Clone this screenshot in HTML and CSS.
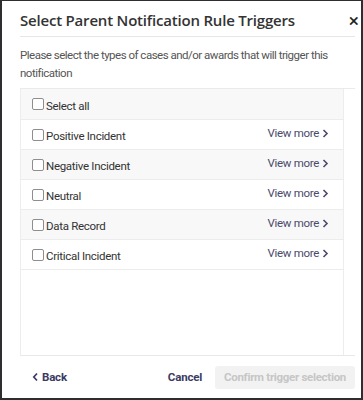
FILE: index.html
```html
<!DOCTYPE html>
<html lang="en">
<head>
  <meta charset="UTF-8">
  <title>Select Parent Notification Rule Triggers</title>
  <meta name="viewport" content="width=device-width, initial-scale=1.0">
  <link rel="stylesheet" href="styles.css">
</head>
<body>
  <div class="modal">
    <div class="modal-header">
      <h2>Select Parent Notification Rule Triggers</h2>
      <span class="close">&times;</span>
    </div>

    <p class="intro">Please select the types of cases and/or awards that will trigger this notification</p>

    <div class="modal-body">
      <div class="trigger-list">
        <div class="row stripe first">
          <label><span class="check"></span>Select all</label>
        </div>
        <div class="row">
          <label><span class="check"></span>Positive Incident</label>
          <a class="more">View more <svg width="7" height="9" viewBox="0 0 7 9"><path d="M1.5 1 L5 4.5 L1.5 8" fill="none" stroke="currentColor" stroke-width="1.6"/></svg></a>
        </div>
        <div class="row stripe">
          <label><span class="check"></span>Negative Incident</label>
          <a class="more">View more <svg width="7" height="9" viewBox="0 0 7 9"><path d="M1.5 1 L5 4.5 L1.5 8" fill="none" stroke="currentColor" stroke-width="1.6"/></svg></a>
        </div>
        <div class="row">
          <label><span class="check"></span>Neutral</label>
          <a class="more">View more <svg width="7" height="9" viewBox="0 0 7 9"><path d="M1.5 1 L5 4.5 L1.5 8" fill="none" stroke="currentColor" stroke-width="1.6"/></svg></a>
        </div>
        <div class="row stripe">
          <label><span class="check"></span>Data Record</label>
          <a class="more">View more <svg width="7" height="9" viewBox="0 0 7 9"><path d="M1.5 1 L5 4.5 L1.5 8" fill="none" stroke="currentColor" stroke-width="1.6"/></svg></a>
        </div>
        <div class="row">
          <label><span class="check"></span>Critical Incident</label>
          <a class="more">View more <svg width="7" height="9" viewBox="0 0 7 9"><path d="M1.5 1 L5 4.5 L1.5 8" fill="none" stroke="currentColor" stroke-width="1.6"/></svg></a>
        </div>
      </div>
    </div>

    <div class="modal-footer">
      <a class="back"><svg width="7" height="10" viewBox="0 0 7 10"><path d="M5 1.5 L1.8 5 L5 8.5" fill="none" stroke="currentColor" stroke-width="1.7"/></svg> Back</a>
      <div class="actions">
        <a class="cancel">Cancel</a>
        <button disabled>Confirm trigger selection</button>
      </div>
    </div>
  </div>
</body>
</html>
```

FILE: styles.css
```css
body {
  margin: 0;
  padding: 1px 2px 2px 2px;
  background: #2e2e30;
  font-family: Roboto, 'Liberation Sans', sans-serif;
  overflow: hidden;
}

.modal {
  background: #fff;
  height: 397px;
  padding: 0 6px 0 18px;
  display: flex;
  flex-direction: column;
  overflow: hidden;
}

.modal-header {
  display: flex;
  justify-content: space-between;
  align-items: center;
  height: 35px;
  border-bottom: 1px solid #e6e6e6;
}

.modal-header h2 {
  margin: 0;
  font-family: 'Open Sans', sans-serif;
  font-size: 15px;
  font-weight: 600;
  letter-spacing: -0.2px;
  color: #333;
  padding-top: 2px;
}

.close {
  font-size: 19px;
  color: #222;
  margin-right: -4px;
  padding-top: 4px;
}

.intro {
  margin: 0;
  padding: 9px 0 6px;
  font-size: 11.5px;
  letter-spacing: -0.5px;
  line-height: 18px;
  color: #555;
  border-bottom: 1px solid #eaeaea;
}

.modal-body {
  flex: 1;
  border-bottom: 1px solid #e8e8e8;
  padding-right: 11px;
  display: flex;
  flex-direction: column;
}

.trigger-list {
  flex: 1;
  border-left: 1px solid #ededed;
  border-right: 1px solid #ededed;
}

.row {
  height: 29px;
  border-bottom: 1px solid #ececec;
  display: flex;
  justify-content: space-between;
  align-items: center;
  padding: 0 14px 0 11px;
}

.row.first {
  height: 30px;
}

.row.stripe {
  background: #f8f8f8;
}

.row label {
  display: flex;
  align-items: center;
  font-size: 11.5px;
  letter-spacing: -0.3px;
  color: #333;
  padding-top: 3px;
}

.check {
  width: 10px;
  height: 10px;
  border: 1px solid #8e8e8e;
  border-radius: 2px;
  background: #fff;
  margin-right: 2px;
  margin-top: -3px;
}

.more {
  font-size: 11.5px;
  letter-spacing: -0.3px;
  color: #4a4a6c;
  display: flex;
  align-items: center;
  gap: 3px;
  margin-top: -3px;
}

.modal-footer {
  height: 42px;
  display: flex;
  justify-content: space-between;
  align-items: center;
  padding-left: 12px;
}

.back,
.cancel {
  font-size: 11.5px;
  letter-spacing: -0.2px;
  font-weight: 700;
  color: #3b3b64;
  display: flex;
  align-items: center;
  gap: 3px;
}

.actions {
  display: flex;
  align-items: center;
  gap: 13px;
}

button {
  font-family: Roboto, sans-serif;
  font-size: 11.5px;
  letter-spacing: -0.3px;
  font-weight: 700;
  color: #c6c6c6;
  background: #f2f2f2;
  border: none;
  border-radius: 3px;
  height: 23px;
  padding: 0 9px;
}
```
